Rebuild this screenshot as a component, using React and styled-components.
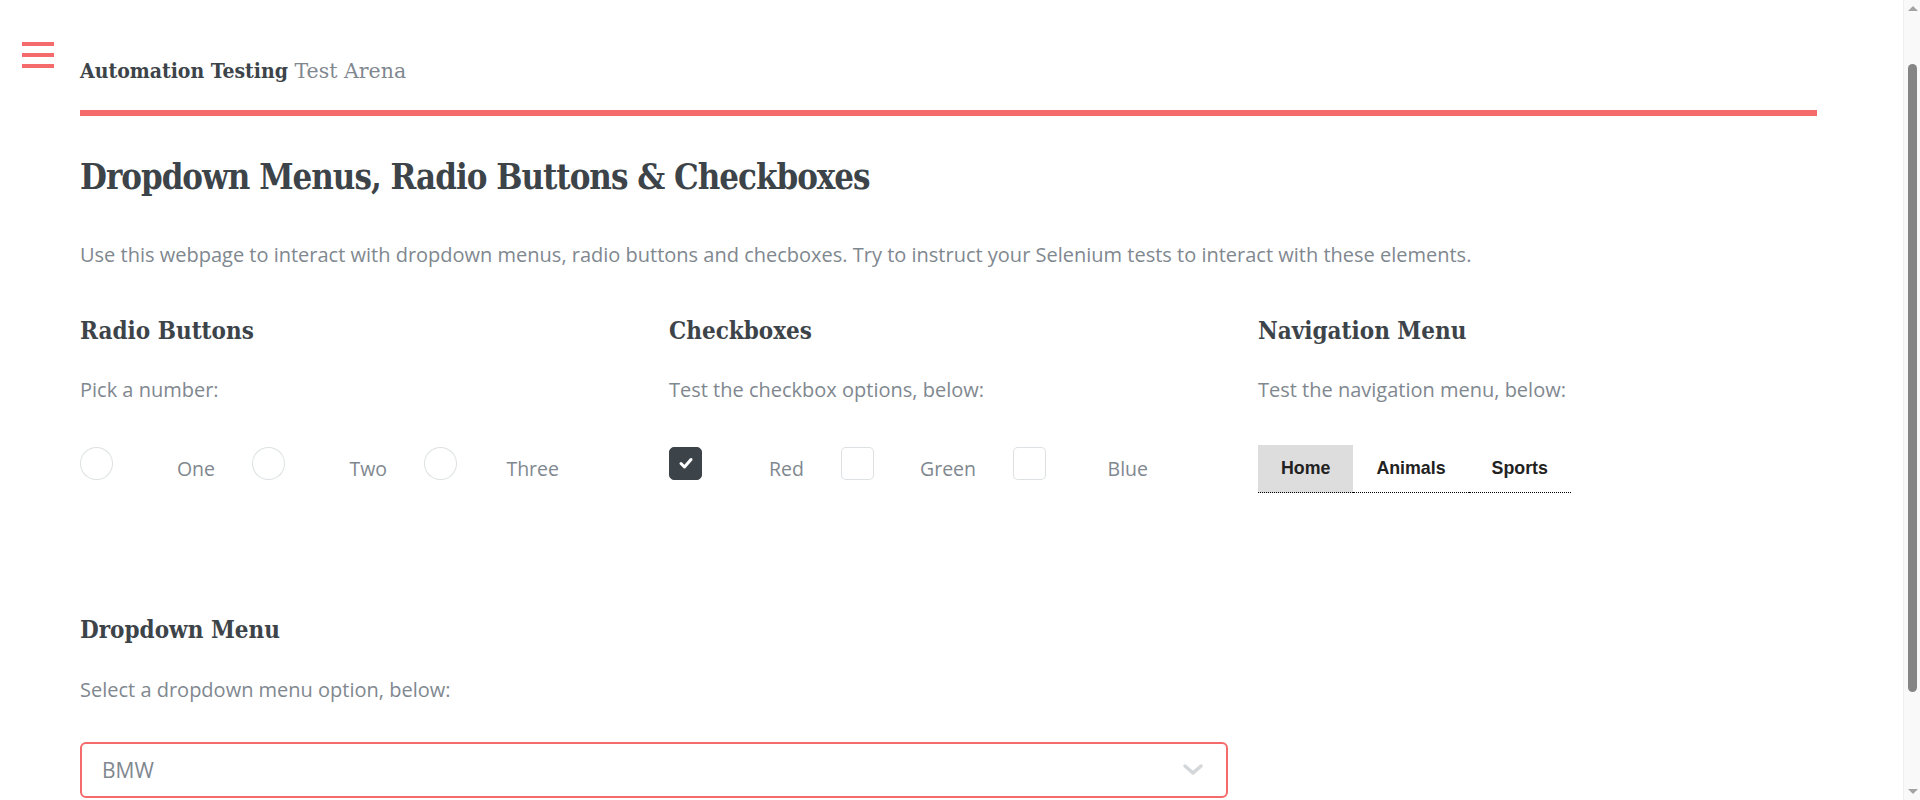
import styled, { createGlobalStyle } from 'styled-components'

// GLOBAL
const GlobalStyle = createGlobalStyle`
  html, body {
    margin: 0;
    padding: 0;
    background: #ffffff;
  }
  body {
    font-family: "Open Sans", "Liberation Sans", sans-serif;
    font-size: 20px;
    line-height: 1.65;
    color: #7f888f;
  }
  * { box-sizing: border-box; }
`

const headingFont = `"DejaVu Serif Condensed", "DejaVu Serif", "Liberation Serif", serif`

// LAYOUT
const Page = styled.div`
  display: flex;
  min-height: 975px;
`

const ToggleColumn = styled.div`
  width: 80px;
  flex-shrink: 0;
  padding: 42px 0 0 22px;
`

const Burger = styled.a`
  display: flex;
  flex-direction: column;
  gap: 7px;
  width: 32px;
  cursor: pointer;

  & span {
    display: block;
    height: 4px;
    background: #f56a6a;
  }
`

const Main = styled.main`
  flex: 1;
  padding: 0 103px 176px 0;
`

const Header = styled.header`
  padding: 54px 0 22px;
  border-bottom: solid 6px #f56a6a;
`

const Logo = styled.a`
  font-family: "DejaVu Serif", "Liberation Serif", serif;
  font-size: 20.5px;
  line-height: 33px;
  color: #7f888f;
  text-decoration: none;

  & strong {
    font-family: ${headingFont};
    font-stretch: condensed;
    font-size: 21px;
    color: #3d4449;
    font-weight: 700;
  }
`

const Title = styled.h1`
  font-family: ${headingFont};
  font-stretch: condensed;
  font-weight: 700;
  font-size: 34.5px;
  line-height: 48px;
  letter-spacing: -1px;
  color: #3d4449;
  margin: 37px 0 0;
`

const Lead = styled.p`
  margin: ${p => p.$top || 0}px 0 0;
`

const Grid = styled.div`
  display: grid;
  grid-template-columns: repeat(3, 1fr);
  column-gap: 30px;
  margin-top: ${p => p.$top || 0}px;
`

const Section = styled.section`
  grid-column: span ${p => p.$span || 1};
`

const SubTitle = styled.h3`
  font-family: ${headingFont};
  font-stretch: condensed;
  font-weight: 700;
  font-size: 24px;
  line-height: 37.5px;
  color: #3d4449;
  margin: 0;
`

const Note = styled.p`
  margin: ${p => p.$top || 23}px 0 0;
`

const OptionRow = styled.div`
  display: flex;
  margin-top: 41px;
`

const Option = styled.label`
  display: flex;
  align-items: flex-start;
  width: 172px;
  cursor: pointer;
`

const Mark = styled.span`
  width: 33px;
  height: 33px;
  flex-shrink: 0;
  display: flex;
  align-items: center;
  justify-content: center;
  border-radius: ${p => (p.$round ? '50%' : '5px')};
  border: solid 1px ${p => (p.$checked ? '#3d4449' : 'rgba(210, 215, 217, 0.75)')};
  background: ${p => (p.$checked ? '#3d4449' : '#ffffff')};
`

const OptionText = styled.span`
  width: 102px;
  text-align: right;
  margin-top: 8px;
  font-size: 19.5px;
  line-height: 28px;
`

const Tabs = styled.ul`
  display: flex;
  list-style: none;
  margin: 39px 0 0;
  padding: 0;
`

const Tab = styled.li`
  padding: 0 23px;
  height: 48px;
  line-height: 47px;
  font-family: "Liberation Sans", Arial, sans-serif;
  font-weight: 700;
  font-size: 17.8px;
  color: #222222;
  background: ${p => (p.$active ? '#dddddd' : 'transparent')};
  border-bottom: dotted 1px #000000;
`

const Select = styled.div`
  display: flex;
  align-items: center;
  justify-content: space-between;
  height: 56px;
  margin-top: 36px;
  padding: 0 22px 0 20px;
  border: solid 2px #f56a6a;
  border-radius: 6px;
  color: #7f888f;
  font-size: 21px;
`

// fake browser scrollbar, drawn over the right edge
const ScrollTrack = styled.div`
  position: fixed;
  top: 0;
  right: 0;
  width: 17px;
  height: 100vh;
  background: #f9f9f9;
  border-left: solid 1px #f0f0f0;
`

const ScrollThumb = styled.div`
  position: absolute;
  left: 4px;
  right: 3px;
  top: 64px;
  height: 628px;
  border-radius: 6px;
  background: #858585;
`

const ScrollArrow = styled.div`
  position: absolute;
  left: 4px;
  ${p => (p.$down ? 'bottom: 6px;' : 'top: 6px;')}
  width: 0;
  height: 0;
  border-left: solid 5px transparent;
  border-right: solid 5px transparent;
  ${p => (p.$down ? 'border-top: solid 5px #a3a3a3;' : 'border-bottom: solid 5px #a3a3a3;')}
`

function Check() {
  return (
    <svg width="16" height="16" viewBox="0 0 16 16">
      <polyline points="3,8.5 6.5,12 13,4.5" fill="none" stroke="#ffffff" strokeWidth="3" strokeLinecap="round" strokeLinejoin="round" />
    </svg>
  )
}

function Chevron() {
  return (
    <svg width="22" height="14" viewBox="0 0 22 14">
      <polyline points="3,3 11,10 19,3" fill="none" stroke="#d4d7d9" strokeWidth="3.5" strokeLinecap="round" strokeLinejoin="round" />
    </svg>
  )
}

const radios = ['One', 'Two', 'Three']
const boxes = [
  { label: 'Red', checked: true },
  { label: 'Green', checked: false },
  { label: 'Blue', checked: false },
]
const tabs = ['Home', 'Animals', 'Sports']

export default function App() {
  return (
    <>
      <GlobalStyle />
      <Page>
        <ToggleColumn>
          <Burger>
            <span />
            <span />
            <span />
          </Burger>
        </ToggleColumn>

        <Main>
          <Header>
            <Logo href="#"><strong>Automation Testing</strong> Test Arena</Logo>
          </Header>

          <Title>Dropdown Menus, Radio Buttons &amp; Checkboxes</Title>
          <Lead $top={37}>
            Use this webpage to interact with dropdown menus, radio buttons and checboxes. Try to instruct your Selenium tests to interact with these elements.
          </Lead>

          <Grid $top={41}>
            <Section>
              <SubTitle>Radio Buttons</SubTitle>
              <Note>Pick a number:</Note>
              <OptionRow>
                {radios.map(r => (
                  <Option key={r}>
                    <Mark $round />
                    <OptionText>{r}</OptionText>
                  </Option>
                ))}
              </OptionRow>
            </Section>

            <Section>
              <SubTitle>Checkboxes</SubTitle>
              <Note>Test the checkbox options, below:</Note>
              <OptionRow>
                {boxes.map(b => (
                  <Option key={b.label}>
                    <Mark $checked={b.checked}>{b.checked && <Check />}</Mark>
                    <OptionText>{b.label}</OptionText>
                  </Option>
                ))}
              </OptionRow>
            </Section>

            <Section>
              <SubTitle>Navigation Menu</SubTitle>
              <Note>Test the navigation menu, below:</Note>
              <Tabs>
                {tabs.map((t, i) => (
                  <Tab key={t} $active={i === 0}>{t}</Tab>
                ))}
              </Tabs>
            </Section>
          </Grid>

          <Grid $top={118}>
            <Section $span={2}>
              <SubTitle>Dropdown Menu</SubTitle>
              <Note $top={25}>Select a dropdown menu option, below:</Note>
              <Select>
                <span>BMW</span>
                <Chevron />
              </Select>
            </Section>
          </Grid>
        </Main>
      </Page>
      <ScrollTrack>
        <ScrollArrow />
        <ScrollThumb />
        <ScrollArrow $down />
      </ScrollTrack>
    </>
  )
}
